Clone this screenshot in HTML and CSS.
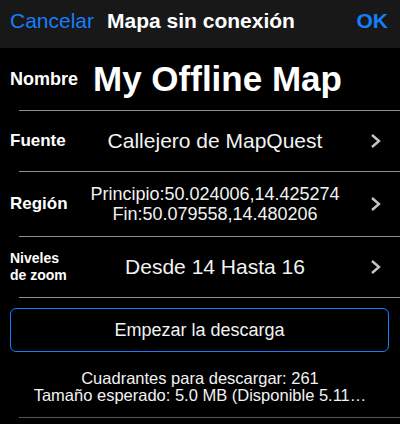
FILE: index.html
```html
<!DOCTYPE html>
<html lang="es">
<head>
    <meta charset="UTF-8">
    <meta name="viewport" content="width=device-width, initial-scale=1.0">
    <title>Mapa sin conexión</title>
    <link rel="stylesheet" href="styles.css">
</head>
<body>

    <!-- Top bar -->
    <div class="navbar">
        <span class="nav-btn">Cancelar</span>
        <span class="nav-title">Mapa sin conexión</span>
        <span class="nav-btn nav-ok">OK</span>
    </div>

    <!-- Map name -->
    <div class="row row-name">
        <span class="label label-name">Nombre</span>
        <span class="map-name">My Offline Map</span>
    </div>
    <div class="divider"></div>

    <!-- Source -->
    <div class="row row-source">
        <span class="label">Fuente</span>
        <span class="value">Callejero de MapQuest</span>
        <svg class="chevron" width="12" height="16" viewBox="0 0 12 16"><polyline points="2,2 9,8 2,14"/></svg>
    </div>
    <div class="divider"></div>

    <!-- Region -->
    <div class="row row-region">
        <span class="label">Región</span>
        <span class="value value-small">Principio:50.024006,14.425274<br>Fin:50.079558,14.480206</span>
        <svg class="chevron" width="12" height="16" viewBox="0 0 12 16"><polyline points="2,2 9,8 2,14"/></svg>
    </div>
    <div class="divider"></div>

    <!-- Zoom levels -->
    <div class="row row-zoom">
        <span class="label label-small">Niveles<br>de zoom</span>
        <span class="value">Desde 14 Hasta 16</span>
        <svg class="chevron" width="12" height="16" viewBox="0 0 12 16"><polyline points="2,2 9,8 2,14"/></svg>
    </div>
    <div class="divider"></div>

    <button class="download">Empezar la descarga</button>

    <div class="info">
        <div>Cuadrantes para descargar: 261</div>
        <div>Tamaño esperado: 5.0 MB (Disponible 5.11…</div>
    </div>
    <div class="divider divider-dark"></div>

</body>
</html>
```

FILE: styles.css
```css
body {
    margin: 0;
    background-color: #000;
    color: #fff;
    font-family: "Liberation Sans", Arial, sans-serif;
    width: 400px;
}

.navbar {
    display: flex;
    align-items: flex-start;
    height: 48px;
    padding: 8px 12px 0 10px;
    box-sizing: border-box;
    background-color: #181818;
    font-size: 21px;
    line-height: 25px;
}
.nav-btn {
    color: #157efb;
}
.nav-title {
    font-weight: bold;
    margin-left: 13px;
}
.nav-ok {
    margin-left: auto;
    font-weight: bold;
}

.row {
    display: flex;
    align-items: center;
    padding: 0 18px 0 10px;
}
.row-name {
    height: 62px;
}
.row-source,
.row-zoom {
    height: 60px;
}
.row-region {
    height: 64px;
}

.label {
    width: 80px;
    flex-shrink: 0;
    font-weight: bold;
    font-size: 17px;
}
.label-name {
    width: 83px;
    font-size: 18px;
}
.label-small {
    font-size: 14px;
    line-height: 17px;
}

.map-name {
    font-weight: bold;
    font-size: 35px;
}

.value {
    flex: 1;
    text-align: center;
    font-size: 21px;
    color: #f2f2f2;
}
.value-small {
    font-size: 18px;
    line-height: 20px;
}

.chevron {
    margin-left: 30px;
    fill: none;
    stroke: #c4c4c4;
    stroke-width: 2.4;
}

.divider {
    height: 1px;
    margin-left: 19px;
    background-color: #8e8e8e;
}
.divider-dark {
    background-color: #555;
}

.download {
    display: block;
    width: 379px;
    height: 44px;
    margin: 10px 0 0 10px;
    border: 1.5px solid #157efb;
    border-radius: 6px;
    background: none;
    color: #f2f2f2;
    font-family: "Liberation Sans", Arial, sans-serif;
    font-size: 18px;
}

.info {
    margin-top: 18px;
    padding-bottom: 13px;
    text-align: center;
    font-size: 16.5px;
    line-height: 17px;
    color: #f2f2f2;
}
```
